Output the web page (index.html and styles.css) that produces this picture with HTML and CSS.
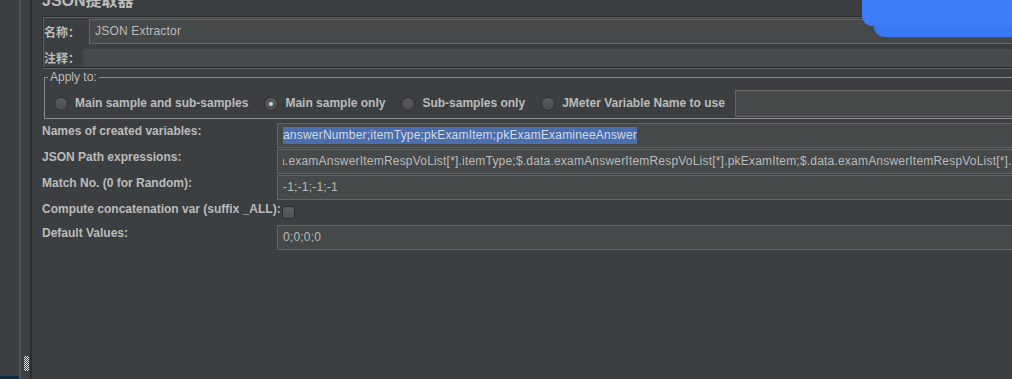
FILE: index.html
```html
<!DOCTYPE html>
<html lang="zh">
<head>
    <meta charset="UTF-8">
    <title>JSON提取器</title>
    <link rel="stylesheet" href="styles.css">
</head>
<body>
    <div class="app">
        <!-- Test plan tree (collapsed) -->
        <div class="tree">
            <div class="tree-selection"></div>
        </div>

        <!-- Split pane divider -->
        <div class="splitter">
            <div class="grip"></div>
        </div>

        <div class="editor">
            <div class="editor-inner">
                <h1 class="title">JSON提取器</h1>

                <div class="name-box">
                    <div class="name-row">
                        <span class="cjk-label name-label">名称：</span>
                        <div class="field name-field">JSON Extractor</div>
                    </div>
                    <div class="comment-row">
                        <span class="cjk-label comment-label">注释：</span>
                        <div class="comment-field"></div>
                    </div>
                </div>

                <fieldset class="apply">
                    <legend>Apply to:</legend>
                    <div class="apply-row">
                        <div class="radio">
                            <span class="radio-dot"></span>
                            <span class="radio-label">Main sample and sub-samples</span>
                        </div>
                        <div class="radio">
                            <span class="radio-dot checked"></span>
                            <span class="radio-label">Main sample only</span>
                        </div>
                        <div class="radio">
                            <span class="radio-dot"></span>
                            <span class="radio-label">Sub-samples only</span>
                        </div>
                        <div class="radio last">
                            <span class="radio-dot"></span>
                            <span class="radio-label">JMeter Variable Name to use</span>
                        </div>
                        <div class="field var-field"></div>
                    </div>
                </fieldset>

                <div class="rows">
                    <div class="row">
                        <span class="row-label">Names of created variables:</span>
                        <div class="field"><span class="selected">answerNumber;itemType;pkExamItem;pkExamExamineeAnswer</span></div>
                    </div>
                    <div class="row">
                        <span class="row-label">JSON Path expressions:</span>
                        <div class="field">
                            <div class="clip"><span class="scrolled">a.examAnswerItemRespVoList[*].itemType;$.data.examAnswerItemRespVoList[*].pkExamItem;$.data.examAnswerItemRespVoList[*].pkExamExamineeAnswer</span></div>
                        </div>
                    </div>
                    <div class="row">
                        <span class="row-label">Match No. (0 for Random):</span>
                        <div class="field">-1;-1;-1;-1</div>
                    </div>
                    <div class="row check-row">
                        <span class="row-label">Compute concatenation var (suffix _ALL):</span>
                        <span class="checkbox"></span>
                    </div>
                    <div class="row">
                        <span class="row-label">Default Values:</span>
                        <div class="field">0;0;0;0</div>
                    </div>
                </div>
            </div>
        </div>
    </div>

    <!-- Floating window edge over the top right corner -->
    <div class="overlay overlay-back"></div>
    <div class="overlay overlay-front"></div>
</body>
</html>
```

FILE: styles.css
```css
/* General styling */
body {
    margin: 0;
    background-color: #3c3f41;
    color: #bbbbbb;
    font-family: 'Liberation Sans', 'Noto Sans CJK SC', sans-serif;
    font-size: 12px;
    overflow: hidden;
}

.app {
    display: flex;
    height: 100vh;
}

/* Tree and splitter */
.tree {
    width: 19px;
    border-right: 2px solid #505456;
    display: flex;
    flex-direction: column;
    justify-content: flex-end;
}

.tree-selection {
    height: 3px;
    background-color: #0e2a47;
}

.splitter {
    width: 9px;
    border-right: 2px solid #2b2d2f;
    display: flex;
    flex-direction: column;
    justify-content: flex-end;
    padding-bottom: 8px;
}

.grip {
    width: 5px;
    height: 15px;
    margin-left: 3px;
    background-image: conic-gradient(#e6e6e6 25%, #3c3f41 0 50%, #e6e6e6 0 75%, #3c3f41 0);
    background-size: 2px 2px;
}

/* Editor panel */
.editor {
    flex: 1;
    overflow: hidden;
    padding-left: 10px;
}

.editor-inner {
    margin-right: -40px;
}

.title {
    margin: -9px 0 0 0;
    font-size: 16px;
    line-height: 19px;
    font-weight: bold;
    color: #bbbbbb;
}

/* Name / comment box */
.name-box {
    margin-top: 6px;
    border: 1px solid #2b2b2b;
    box-shadow: inset 1px 1px 0 #5e6163, 1px 1px 0 #5e6163;
    padding: 2px 0 0 1px;
}

.cjk-label {
    font-family: 'Noto Sans CJK SC', sans-serif;
    font-weight: bold;
    font-size: 12px;
    line-height: 16px;
}

.name-row {
    display: flex;
    align-items: center;
}

.name-label {
    width: 45px;
}

.field {
    flex: 1;
    height: 25px;
    box-sizing: border-box;
    border: 1px solid #646464;
    background-color: #45494a;
    padding: 0 5px;
    line-height: 23px;
    white-space: nowrap;
    overflow: hidden;
    color: #bbbbbb;
    letter-spacing: 0.2px;
}

.comment-row {
    display: flex;
    align-items: center;
    margin-top: 5px;
}

.comment-label {
    width: 39px;
}

.comment-field {
    flex: 1;
    height: 18px;
    background-color: #45494a;
}

/* Apply to group */
.apply {
    margin: 2px 0 0 2px;
    padding: 0 0 1px 0;
    border: 1px solid #8a8d8f;
    min-width: 0;
}

.apply legend {
    margin-left: 3px;
    padding: 0 2px;
    line-height: 15px;
}

.apply-row {
    display: flex;
    align-items: center;
    padding: 5px 0 0 9px;
}

.radio {
    display: flex;
    align-items: center;
    margin-right: 16px;
}

.radio.last {
    margin-right: 10px;
}

.radio-dot {
    width: 14px;
    height: 14px;
    box-sizing: border-box;
    border-radius: 50%;
    border: 1px solid #2d2f31;
    background: linear-gradient(#5b5e61, #4a4d50);
    display: flex;
    align-items: center;
    justify-content: center;
}

.radio-dot.checked::after {
    content: "";
    width: 4px;
    height: 4px;
    border-radius: 50%;
    background-color: #d6d6d6;
}

.radio-label {
    margin-left: 7px;
    font-weight: bold;
    line-height: 15px;
    white-space: nowrap;
}

.var-field {
    height: 27px;
}

/* Extractor settings */
.rows {
    margin-top: 3px;
}

.row {
    display: flex;
    align-items: flex-start;
    height: 26px;
}

.row .field {
    margin-top: 1px;
}

.row-label {
    width: 235px;
    flex-shrink: 0;
    padding-top: 2px;
    font-weight: bold;
    line-height: 15px;
    white-space: nowrap;
}

.selected {
    display: inline-block;
    line-height: 17px;
    vertical-align: middle;
    background-color: #4b6eaf;
    color: #d4d9e2;
}

.clip {
    overflow: hidden;
}

.scrolled {
    margin-left: -5px;
}

.check-row {
    height: 24px;
}

.checkbox {
    width: 13px;
    height: 13px;
    box-sizing: border-box;
    margin: 6px 0 0 5px;
    border: 1px solid #2d2f31;
    border-radius: 2px;
    background: linear-gradient(#5d6063, #4e5154);
}

/* Overlay in the corner */
.overlay {
    position: absolute;
    top: 0;
    right: 0;
    border-bottom-left-radius: 10px;
}

.overlay-back {
    width: 138px;
    height: 37px;
    background-color: #3a79f5;
}

.overlay-front {
    width: 150px;
    height: 26px;
    background-color: #3d7dfa;
}
```
